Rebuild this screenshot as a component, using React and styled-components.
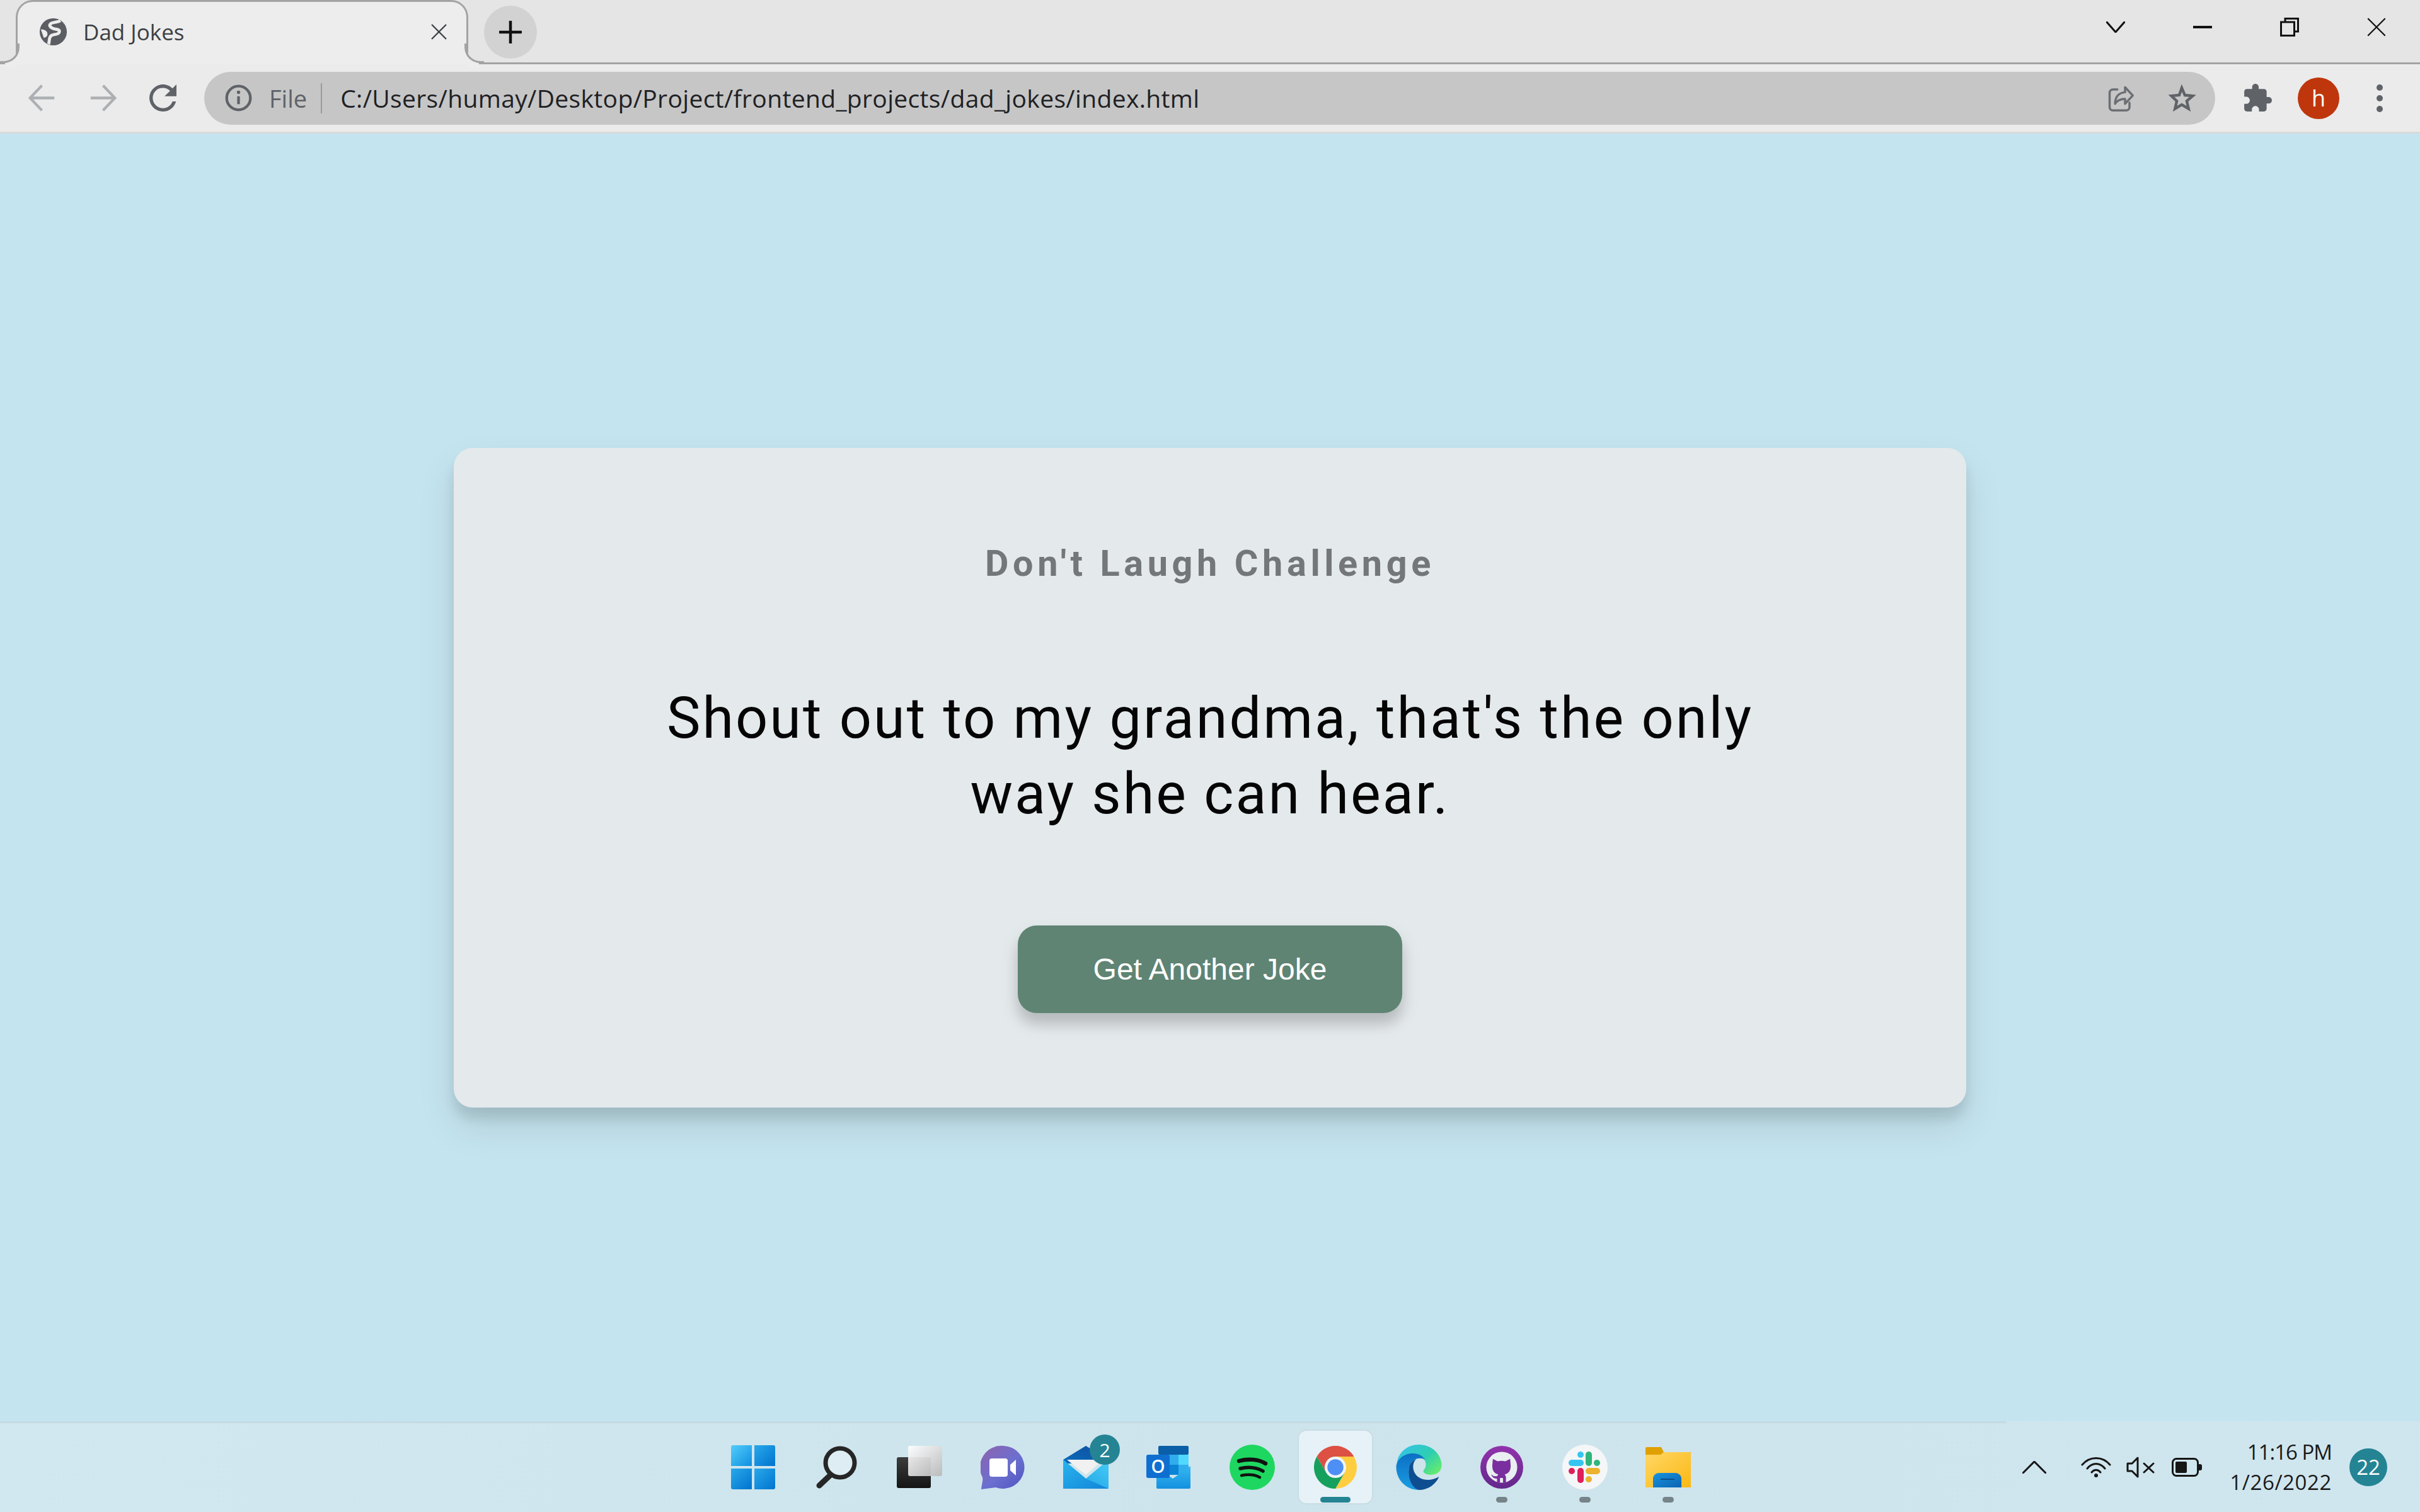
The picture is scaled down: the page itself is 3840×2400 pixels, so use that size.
// Dad Jokes page inside a Chrome window on the Windows 11 desktop.
import React from "react";
import styled, { createGlobalStyle } from "styled-components";

// ==== GLOBAL ====
const Global = createGlobalStyle`
  html, body { margin: 0; padding: 0; }
  body { background: #c4e4ef; font-family: "Open Sans", "Liberation Sans", sans-serif; }
  * { box-sizing: border-box; }
`;

const Screen = styled.div`
  width: 3840px;
  height: 2400px;
  display: flex;
  flex-direction: column;
  overflow: hidden;
`;

// ==== TAB STRIP ====
const TabStrip = styled.div`
  height: 102px;
  flex: none;
  display: flex;
  align-items: flex-start;
  padding-left: 25px;
  background: #e5e5e5;
  border-bottom: 3px solid #a3a3a3;
`;
const Tab = styled.div`
  position: relative;
  width: 718px;
  height: 102px;
  display: flex;
  align-items: center;
  padding: 0 31px 4px 34px;
  background: #ededed;
  border: 3px solid #a3a3a3;
  border-bottom: none;
  border-radius: 27px 27px 0 0;
  &::before, &::after {
    content: "";
    position: absolute;
    bottom: 2px;
    width: 28px;
    height: 28px;
    border-bottom: 3px solid #a3a3a3;
  }
  &::before {
    left: -28px;
    border-right: 3px solid #a3a3a3;
    border-bottom-right-radius: 25px;
    box-shadow: 8px 8px 0 #ededed;
  }
  &::after {
    right: -28px;
    border-left: 3px solid #a3a3a3;
    border-bottom-left-radius: 25px;
    box-shadow: -8px 8px 0 #ededed;
  }
`;
const TabTitle = styled.span`
  flex: 1;
  margin-left: 25px;
  font-size: 35px;
  color: #3c4043;
`;
const NewTab = styled.div`
  width: 84px;
  height: 84px;
  margin: 9px 0 0 25px;
  border-radius: 50%;
  background: #d2d2d2;
  display: flex;
  align-items: center;
  justify-content: center;
`;
const Caption = styled.div`
  margin-left: auto;
  display: flex;
`;
const CaptionBtn = styled.div`
  width: 138px;
  height: 86px;
  display: flex;
  align-items: center;
  justify-content: center;
`;

// ==== TOOLBAR ====
const Toolbar = styled.div`
  height: 110px;
  flex: none;
  display: flex;
  align-items: center;
  padding-left: 45px;
  background: #ebebeb;
  border-bottom: 3px solid #dadada;
`;
const Tool = styled.div`
  display: flex;
  flex: none;
  margin-left: ${(props) => props.$left || 0}px;
`;
const Omnibox = styled.div`
  width: 3191px;
  height: 84px;
  margin-left: 44px;
  flex: none;
  display: flex;
  align-items: center;
  padding: 0 30px 0 33px;
  background: #c6c6c6;
  border-radius: 42px;
`;
const FileLabel = styled.span`
  margin-left: 27px;
  font-size: 38px;
  color: #5f6368;
`;
const Divider = styled.span`
  width: 2px;
  height: 48px;
  margin: 0 29px 0 22px;
  background: #9a9a9a;
`;
const Url = styled.span`
  flex: 1;
  font-size: 39px;
  letter-spacing: 0.35px;
  color: #202124;
  white-space: nowrap;
`;
const Avatar = styled.div`
  width: 66px;
  height: 66px;
  margin-left: 41px;
  flex: none;
  border-radius: 50%;
  background: #bf360c;
  color: #fff;
  font-size: 36px;
  display: flex;
  align-items: center;
  justify-content: center;
`;
const MoreDots = styled.div`
  margin-left: 59px;
  display: flex;
  flex-direction: column;
  gap: 7px;
  & > i {
    display: block;
    width: 10px;
    height: 10px;
    border-radius: 50%;
    background: #5f6368;
  }
`;

// ==== PAGE ====
const Page = styled.main`
  flex: 1;
  display: flex;
  align-items: center;
  justify-content: center;
  background: #c4e4ef;
`;
const Card = styled.section`
  width: 2400px;
  padding: 150px 60px;
  background: #e4e9ec;
  border-radius: 30px;
  text-align: center;
  box-shadow: 0 30px 60px rgba(0, 0, 0, 0.1), 0 18px 18px rgba(0, 0, 0, 0.1);
`;
const Heading = styled.h3`
  margin: 0;
  font: 700 57.6px/68px Roboto, sans-serif;
  letter-spacing: 6.6px;
  color: #747779;
`;
const Joke = styled.div`
  max-width: 1800px;
  margin: 152px auto 148px;
  font: 400 90px/120px Roboto, sans-serif;
  letter-spacing: 3px;
  color: #050505;
`;
const JokeButton = styled.button`
  width: 610px;
  height: 139px;
  border: 0;
  border-radius: 30px;
  background: #5f8473;
  color: #fff;
  font: 400 48px "Liberation Sans", Arial, sans-serif;
  box-shadow: 0 15px 30px rgba(0, 0, 0, 0.12), 0 18px 18px rgba(0, 0, 0, 0.1);
`;

// ==== TASKBAR ====
const Taskbar = styled.footer`
  position: relative;
  height: 144px;
  flex: none;
  display: grid;
  grid-template-columns: 1fr auto 1fr;
  padding-top: 15px;
  background: linear-gradient(100deg, #d2e8f0 0%, #cde4ec 50%, #d0e6ee 100%);
  &::before {
    content: "";
    position: absolute;
    top: 0;
    left: 0;
    width: 3183px;
    height: 3px;
    background: #c5dae2;
  }
`;
const Dock = styled.div`
  grid-column: 2;
  display: flex;
  gap: 16px;
  margin-left: 2px;
`;
const DockCell = styled.div`
  position: relative;
  width: 116px;
  height: 115px;
  display: flex;
  align-items: center;
  justify-content: center;
  border-radius: 12px;
  background: ${(props) => (props.$active ? "#e6f2f7" : "transparent")};
  box-shadow: ${(props) => (props.$active ? "0 0 0 2px #c8dde4" : "none")};
`;
const RunDot = styled.span`
  position: absolute;
  bottom: 1px;
  left: 50%;
  transform: translateX(-50%);
  width: ${(props) => (props.$active ? 48 : 18)}px;
  height: 9px;
  border-radius: 5px;
  background: ${(props) => (props.$active ? "#248494" : "#76848a")};
`;
const MailBadge = styled.span`
  position: absolute;
  top: 6px;
  right: 4px;
  width: 48px;
  height: 48px;
  border-radius: 50%;
  background: #248494;
  color: #fff;
  font-size: 30px;
  display: flex;
  align-items: center;
  justify-content: center;
`;
const Tray = styled.div`
  grid-column: 3;
  display: flex;
  align-items: center;
  justify-content: flex-end;
  height: 115px;
  padding-right: 52px;
`;
const TrayIcon = styled.div`
  display: flex;
  margin-left: ${(props) => props.$left || 0}px;
`;
const Clock = styled.div`
  margin: 0 28px 0 44px;
  text-align: right;
  font-size: 33px;
  line-height: 48px;
  color: #1a1a1a;
`;
const ClockLine = styled.div`
  letter-spacing: ${(props) => props.$spacing}px;
`;
const NotifyBadge = styled.span`
  width: 60px;
  height: 60px;
  border-radius: 50%;
  background: #248494;
  color: #fff;
  font-size: 33px;
  display: flex;
  align-items: center;
  justify-content: center;
`;

// ==== ICONS ====
const Globe = () => (
  <svg width="45" height="45" viewBox="0 0 24 24">
    <circle cx="12" cy="12" r="11.5" fill="#5a5e63" />
    <path d="M18 2.500c-3 2-7 1-8.500 3S11 9 13 9.500s5 .5 4 3-5 1-7 3-1 5-2 7" fill="none" stroke="#ededed" strokeWidth="2.600" />
    <path d="M1.500 10c3 0 5 1 5.500 3s-1 4-3 4" fill="#ededed" />
  </svg>
);
const Cross = ({ size = 25, color = "#3c4043", weight = 2.2 }) => (
  <svg width={size} height={size} viewBox="0 0 24 24">
    <path d="M1 1l22 22M23 1L1 23" stroke={color} strokeWidth={weight} fill="none" />
  </svg>
);
const Arrow = ({ flip, color }) => (
  <svg width="43" height="43" viewBox="0 0 24 24" style={flip ? { transform: "scaleX(-1)" } : undefined}>
    <path d="M23 12H2M12 1L1.500 12 12 23" fill="none" stroke={color} strokeWidth="2.400" />
  </svg>
);
const Reload = () => (
  <svg width="43" height="43" viewBox="4 4 16 16">
    <path fill="#5f6368" d="M17.650 6.350C16.200 4.900 14.210 4 12 4c-4.420 0-7.990 3.580-7.990 8s3.570 8 7.990 8c3.730 0 6.840-2.550 7.730-6h-2.080c-.82 2.330-3.040 4-5.650 4-3.310 0-6-2.690-6-6s2.690-6 6-6c1.660 0 3.140.69 4.220 1.780L13 11h7V4l-2.350 2.350z" />
  </svg>
);
const Info = () => (
  <svg width="43" height="43" viewBox="0 0 24 24">
    <circle cx="12" cy="12" r="10.500" fill="none" stroke="#5f6368" strokeWidth="2.400" />
    <path d="M12 10.500v7" stroke="#5f6368" strokeWidth="2.400" />
    <circle cx="12" cy="7" r="1.500" fill="#5f6368" />
  </svg>
);
const Share = () => (
  <svg width="44" height="42" viewBox="0 0 24 24">
    <path d="M9 4H5a3 3 0 0 0-3 3v13a3 3 0 0 0 3 3h12a3 3 0 0 0 3-3v-4" fill="none" stroke="#6b6f73" strokeWidth="2" strokeLinecap="round" />
    <path d="M16 2l7 7.500-7 7.500v-4.500c-4 0-7 1-9 4.500 0-6 3-10 9-10.500z" fill="none" stroke="#6b6f73" strokeWidth="2" strokeLinejoin="round" />
  </svg>
);
const Star = () => (
  <svg width="46" height="44" viewBox="0 0 24 24">
    <path d="M12 3l2.700 6.300 6.800.6-5.200 4.500 1.600 6.700-5.900-3.600-5.900 3.600 1.600-6.700L3 9.900l6.800-.6z" fill="none" stroke="#5f6368" strokeWidth="2.400" />
  </svg>
);
const Puzzle = () => (
  <svg width="46" height="46" viewBox="1 1 22 22">
    <path fill="#5f6368" d="M20.500 11H19V7c0-1.100-.9-2-2-2h-4V3.500C13 2.120 11.880 1 10.500 1S8 2.120 8 3.500V5H4c-1.100 0-1.990.9-1.990 2v3.800H3.500c1.490 0 2.700 1.210 2.700 2.700s-1.210 2.700-2.700 2.700H2V20c0 1.100.9 2 2 2h3.800v-1.500c0-1.490 1.210-2.700 2.700-2.700 1.490 0 2.700 1.210 2.700 2.700V22H17c1.100 0 2-.9 2-2v-4h1.500c1.380 0 2.500-1.120 2.500-2.500S21.880 11 20.500 11z" />
  </svg>
);
const Chevron = ({ up, w = 30, h = 18, color = "#111", weight = 3 }) => (
  <svg width={w} height={h} viewBox={`0 0 ${w} ${h}`}>
    <path d={up ? `M1 ${h - 1}L${w / 2} 1L${w - 1} ${h - 1}` : `M1 1L${w / 2} ${h - 1}L${w - 1} 1`} fill="none" stroke={color} strokeWidth={weight} strokeLinecap="round" />
  </svg>
);
const Restore = () => (
  <svg width="30" height="30" viewBox="0 0 30 30">
    <path d="M8 7V1.500h20.500V22H23" fill="none" stroke="#111" strokeWidth="3" />
    <rect x="1.500" y="7" width="21" height="21.500" fill="none" stroke="#111" strokeWidth="3" />
  </svg>
);

const WinStart = () => (
  <svg width="70" height="70" viewBox="0 0 70 70">
    <defs>
      <linearGradient id="winA" x1="0" y1="0" x2="1" y2="1"><stop offset="0" stopColor="#53cdfb" /><stop offset="1" stopColor="#0f8fe0" /></linearGradient>
      <linearGradient id="winB" x1="0" y1="0" x2="1" y2="1"><stop offset="0" stopColor="#2aa8ea" /><stop offset="1" stopColor="#0074cf" /></linearGradient>
    </defs>
    <path fill="url(#winA)" d="M3 0h30v33H0V3a3 3 0 0 1 3-3z" />
    <path fill="url(#winB)" d="M37 0h30a3 3 0 0 1 3 3v30H37z" />
    <path fill="url(#winB)" d="M0 37h33v33H3a3 3 0 0 1-3-3z" />
    <path fill="url(#winB)" d="M37 37h33v30a3 3 0 0 1-3 3H37z" />
  </svg>
);
const Search = () => (
  <svg width="66" height="68" viewBox="0 0 66 68">
    <circle cx="39" cy="27" r="23" fill="#ddedf3" stroke="#262626" strokeWidth="7" />
    <path d="M24 46L6 63" stroke="#262626" strokeWidth="9" strokeLinecap="round" />
  </svg>
);
const TaskView = () => (
  <svg width="72" height="67" viewBox="0 0 72 67">
    <defs>
      <linearGradient id="tvDark" x1="0" y1="0" x2="0" y2="1"><stop offset="0" stopColor="#3d3d3d" /><stop offset="1" stopColor="#141414" /></linearGradient>
      <linearGradient id="tvLight" x1="0" y1="0" x2="1" y2="1"><stop offset="0" stopColor="#ffffff" /><stop offset="1" stopColor="#b9b9b9" /></linearGradient>
    </defs>
    <rect x="0" y="18" width="54" height="49" rx="3" fill="url(#tvDark)" />
    <rect x="18" y="0" width="54" height="48" rx="3" fill="url(#tvLight)" opacity="0.94" />
  </svg>
);
const Chat = () => (
  <svg width="70" height="70" viewBox="0 0 70 70">
    <defs>
      <linearGradient id="chatBg" x1="0" y1="0" x2="1" y2="1"><stop offset="0" stopColor="#8f62ad" /><stop offset="0.55" stopColor="#6b6fd0" /><stop offset="1" stopColor="#5053c0" /></linearGradient>
    </defs>
    <path fill="url(#chatBg)" d="M36 1a34 34 0 1 1-12 66L1 70c1-9 3-14 2-19A34 34 0 0 1 36 1z" />
    <rect x="14" y="21" width="29" height="29" rx="4" fill="#fff" />
    <path d="M47 31l9-8v25l-9-8z" fill="#fff" />
  </svg>
);
const Mail = () => (
  <svg width="72" height="68" viewBox="0 0 72 68">
    <defs>
      <linearGradient id="mailBody" x1="0" y1="0" x2="1" y2="1"><stop offset="0" stopColor="#29b4ee" /><stop offset="1" stopColor="#1285d8" /></linearGradient>
      <linearGradient id="mailFlap" x1="0" y1="1" x2="1" y2="0"><stop offset="0" stopColor="#0a6cbd" /><stop offset="1" stopColor="#0f4f9c" /></linearGradient>
      <linearGradient id="mailSide" x1="0" y1="1" x2="1" y2="0"><stop offset="0" stopColor="#1a9be3" /><stop offset="1" stopColor="#45cdf6" /></linearGradient>
    </defs>
    <path d="M0 22L36 0l36 22v6H0z" fill="url(#mailFlap)" />
    <path d="M6 22h58L36 46z" fill="#f1f1f1" />
    <path d="M0 22l36 30L72 22v46H0z" fill="url(#mailSide)" />
    <path d="M0 22l36 30 36 16H0z" fill="url(#mailBody)" />
  </svg>
);
const Outlook = () => (
  <svg width="72" height="68" viewBox="0 0 72 68">
    <defs>
      <linearGradient id="olBody" x1="0" y1="0" x2="0" y2="1"><stop offset="0" stopColor="#35b8f1" /><stop offset="1" stopColor="#1490df" /></linearGradient>
    </defs>
    <rect x="19" y="0" width="48" height="14" fill="#0a5fa8" rx="2" />
    <rect x="19" y="14" width="16" height="16" fill="#0a87d8" />
    <rect x="35" y="14" width="16" height="16" fill="#2fadec" />
    <rect x="51" y="14" width="16" height="16" fill="#50d9ff" />
    <rect x="19" y="30" width="16" height="16" fill="#0a70c2" />
    <rect x="35" y="30" width="16" height="16" fill="#0b84d6" />
    <rect x="51" y="30" width="16" height="16" fill="#2fadec" />
    <path d="M16 34l26 18 28-20v34a2 2 0 0 1-2 2H18a2 2 0 0 1-2-2z" fill="url(#olBody)" />
    <rect x="0" y="14" width="37" height="37" rx="3" fill="#0f6fd0" />
    <text x="18.500" y="43" textAnchor="middle" fontFamily="'Open Sans', sans-serif" fontSize="28" fontWeight="600" fill="#fff">O</text>
  </svg>
);
const Spotify = () => (
  <svg width="72" height="72" viewBox="0 0 72 72">
    <circle cx="36" cy="36" r="36" fill="#1ed760" />
    <path d="M15 26c14-4 31-3 42 4" fill="none" stroke="#111" strokeWidth="6.500" strokeLinecap="round" />
    <path d="M17 38c12-3 26-2 36 4" fill="none" stroke="#111" strokeWidth="5.500" strokeLinecap="round" />
    <path d="M19 49c10-2 20-2 29 3" fill="none" stroke="#111" strokeWidth="4.500" strokeLinecap="round" />
  </svg>
);
const ChromeLogo = () => (
  <svg width="68" height="68" viewBox="0 0 48 48">
    <path fill="#dd5044" d="M3.200 12A24 24 0 0 1 44.780 12H24A12 12 0 0 0 13.600 30z" />
    <path fill="#ffcd40" d="M44.780 12A24 24 0 0 1 24 48L34.400 30A12 12 0 0 0 24 12z" />
    <path fill="#16a05d" d="M24 48A24 24 0 0 1 3.200 12L13.600 30A12 12 0 0 0 34.400 30z" />
    <circle cx="24" cy="24" r="11.500" fill="#f1f5f8" />
    <circle cx="24" cy="24" r="9" fill="#4e8ff5" />
  </svg>
);
const Edge = () => (
  <svg width="73" height="72" viewBox="0 0 72 72">
    <defs>
      <linearGradient id="edgeTop" x1="0" y1="0" x2="1" y2="0.8"><stop offset="0" stopColor="#35c1f1" /><stop offset="0.6" stopColor="#2ecfb0" /><stop offset="1" stopColor="#66eb6e" /></linearGradient>
      <linearGradient id="edgeBlue" x1="0" y1="0" x2="0" y2="1"><stop offset="0" stopColor="#0c6fc4" /><stop offset="1" stopColor="#1b9de2" /></linearGradient>
    </defs>
    <path fill="url(#edgeTop)" d="M1 30C3 12 18 0 36 0c20 0 36 15 36 33 0 10-8 15-17 15-7 0-12-3-12-6 0-2 4-4 4-10 0-10-9-17-19-17C15 15 5 20 1 30z" />
    <path fill="url(#edgeBlue)" d="M36 72C16 72 0 56 0 36 0 24 12 14 26 14c10 0 16 4 20 10-10-6-24 0-26 14-2 16 8 32 16 34z" />
    <path fill="#0f4d91" d="M36 72c-10-2-18-18-16-34 1-8 6-13 12-15-6 5-7 15-2 23 6 10 22 14 38 5-6 13-18 21-32 21z" />
  </svg>
);
const GitHubBadge = () => (
  <svg width="68" height="68" viewBox="0 0 72 72">
    <defs>
      <linearGradient id="ghRing" x1="0" y1="0" x2="0" y2="1"><stop offset="0" stopColor="#9233ac" /><stop offset="1" stopColor="#62288a" /></linearGradient>
    </defs>
    <circle cx="36" cy="36" r="36" fill="url(#ghRing)" />
    <circle cx="36" cy="36" r="26" fill="#e9eef1" />
    <path fill="#7a2f9e" d="M21 22l8 4q6.500-1.500 13 0l8-4 1 12q0 12-10 14l2 4v10h-5v-8h-5v8h-5v-7q-7 1-10-7 4 4 10 3l2-3q-10-2-10-14z" />
  </svg>
);
const Slack = () => (
  <svg width="72" height="72" viewBox="0 0 72 72">
    <circle cx="36" cy="36" r="36" fill="#f4f6f7" />
    <rect x="24" y="11" width="10" height="10" rx="5" fill="#36c5f0" />
    <rect x="10" y="24" width="24" height="10" rx="5" fill="#36c5f0" />
    <rect x="37" y="11" width="10" height="23" rx="5" fill="#2eb67d" />
    <rect x="50" y="24" width="10" height="10" rx="5" fill="#2eb67d" />
    <rect x="10" y="37" width="10" height="10" rx="5" fill="#e01e5a" />
    <rect x="24" y="37" width="10" height="24" rx="5" fill="#e01e5a" />
    <rect x="37" y="37" width="23" height="10" rx="5" fill="#ecb22e" />
    <rect x="37" y="50" width="10" height="10" rx="5" fill="#ecb22e" />
  </svg>
);
const Folder = () => (
  <svg width="72" height="64" viewBox="0 0 72 64">
    <defs>
      <linearGradient id="foBody" x1="0" y1="0" x2="1" y2="1"><stop offset="0" stopColor="#ffd766" /><stop offset="1" stopColor="#fbb813" /></linearGradient>
      <linearGradient id="foBlue" x1="0" y1="0" x2="1" y2="1"><stop offset="0" stopColor="#1a93dd" /><stop offset="1" stopColor="#0a64b4" /></linearGradient>
    </defs>
    <path d="M2 0h23l4 8h43v10H0V2a2 2 0 0 1 2-2z" fill="#e0a000" />
    <path d="M0 12h24l5-4h41a2 2 0 0 1 2 2v54H0z" fill="url(#foBody)" />
    <path d="M12 64V50a9 9 0 0 1 9-9h27a9 9 0 0 1 9 9v14z" fill="url(#foBlue)" />
    <rect x="24" y="50" width="22" height="2" fill="#0b4f90" />
  </svg>
);
const Wifi = () => (
  <svg width="48" height="34" viewBox="0 0 48 34" fill="none" stroke="#161616" strokeWidth="3" strokeLinecap="round">
    <path d="M2 13C14 -1 34 -1 46 13" />
    <path d="M10 19C18 9 30 9 38 19" />
    <path d="M17 25C21 20 27 20 31 25" />
    <circle cx="24" cy="30" r="3" fill="#161616" stroke="none" />
  </svg>
);
const Muted = () => (
  <svg width="46" height="34" viewBox="0 0 46 34" fill="none" stroke="#161616" strokeWidth="3" strokeLinejoin="round" strokeLinecap="round">
    <path d="M2 11h7L18 2v30l-9-9H2z" />
    <path d="M28 11l15 14M43 11L28 25" />
  </svg>
);
const Battery = () => (
  <svg width="48" height="30" viewBox="0 0 48 30">
    <rect x="1.500" y="1.500" width="40" height="27" rx="6" fill="none" stroke="#161616" strokeWidth="3" />
    <rect x="6" y="6" width="18" height="18" rx="2" fill="#161616" />
    <path d="M43 10h2a3 3 0 0 1 3 3v4a3 3 0 0 1-3 3h-2z" fill="#161616" />
  </svg>
);

// ==== APP ====
const dockApps = [
  { id: "start", icon: <WinStart /> },
  { id: "search", icon: <Search /> },
  { id: "tasks", icon: <TaskView /> },
  { id: "chat", icon: <Chat /> },
  { id: "mail", icon: <Mail />, badge: "2" },
  { id: "outlook", icon: <Outlook /> },
  { id: "spotify", icon: <Spotify /> },
  { id: "chrome", icon: <ChromeLogo />, active: true, running: true },
  { id: "edge", icon: <Edge /> },
  { id: "github", icon: <GitHubBadge />, running: true },
  { id: "slack", icon: <Slack />, running: true },
  { id: "folder", icon: <Folder />, running: true },
];

export default function App() {
  return (
    <Screen>
      <Global />
      <TabStrip>
        <Tab>
          <Globe />
          <TabTitle>Dad Jokes</TabTitle>
          <Cross />
        </Tab>
        <NewTab>
          <svg width="36" height="36" viewBox="0 0 36 36">
            <path d="M18 1v34M1 18h34" stroke="#111" strokeWidth="4.500" strokeLinecap="round" />
          </svg>
        </NewTab>
        <Caption>
          <CaptionBtn><Chevron /></CaptionBtn>
          <CaptionBtn>
            <svg width="30" height="4" viewBox="0 0 30 4"><rect width="30" height="4" fill="#111" /></svg>
          </CaptionBtn>
          <CaptionBtn><Restore /></CaptionBtn>
          <CaptionBtn><Cross size={30} color="#111" weight={1.800} /></CaptionBtn>
        </Caption>
      </TabStrip>
      <Toolbar>
        <Tool><Arrow color="#adb0b3" /></Tool>
        <Tool $left={54}><Arrow flip color="#adb0b3" /></Tool>
        <Tool $left={52}><Reload /></Tool>
        <Omnibox>
          <Info />
          <FileLabel>File</FileLabel>
          <Divider />
          <Url>C:/Users/humay/Desktop/Project/frontend_projects/dad_jokes/index.html</Url>
          <Share />
          <Tool $left={52}><Star /></Tool>
        </Omnibox>
        <Tool $left={44}><Puzzle /></Tool>
        <Avatar>h</Avatar>
        <MoreDots><i /><i /><i /></MoreDots>
      </Toolbar>
      <Page>
        <Card>
          <Heading>Don't Laugh Challenge</Heading>
          <Joke>Shout out to my grandma, that's the only way she can hear.</Joke>
          <JokeButton>Get Another Joke</JokeButton>
        </Card>
      </Page>
      <Taskbar>
        <Dock>
          {dockApps.map((app) => (
            <DockCell key={app.id} $active={app.active}>
              {app.icon}
              {app.badge && <MailBadge>{app.badge}</MailBadge>}
              {app.running && <RunDot $active={app.active} />}
            </DockCell>
          ))}
        </Dock>
        <Tray>
          <TrayIcon><Chevron up w={38} h={20} color="#161616" /></TrayIcon>
          <TrayIcon $left={55}><Wifi /></TrayIcon>
          <TrayIcon $left={24}><Muted /></TrayIcon>
          <TrayIcon $left={26}><Battery /></TrayIcon>
          <Clock>
            <ClockLine $spacing={-1}>11:16 PM</ClockLine>
            <ClockLine $spacing={0.6}>1/26/2022</ClockLine>
          </Clock>
          <NotifyBadge>22</NotifyBadge>
        </Tray>
      </Taskbar>
    </Screen>
  );
}
